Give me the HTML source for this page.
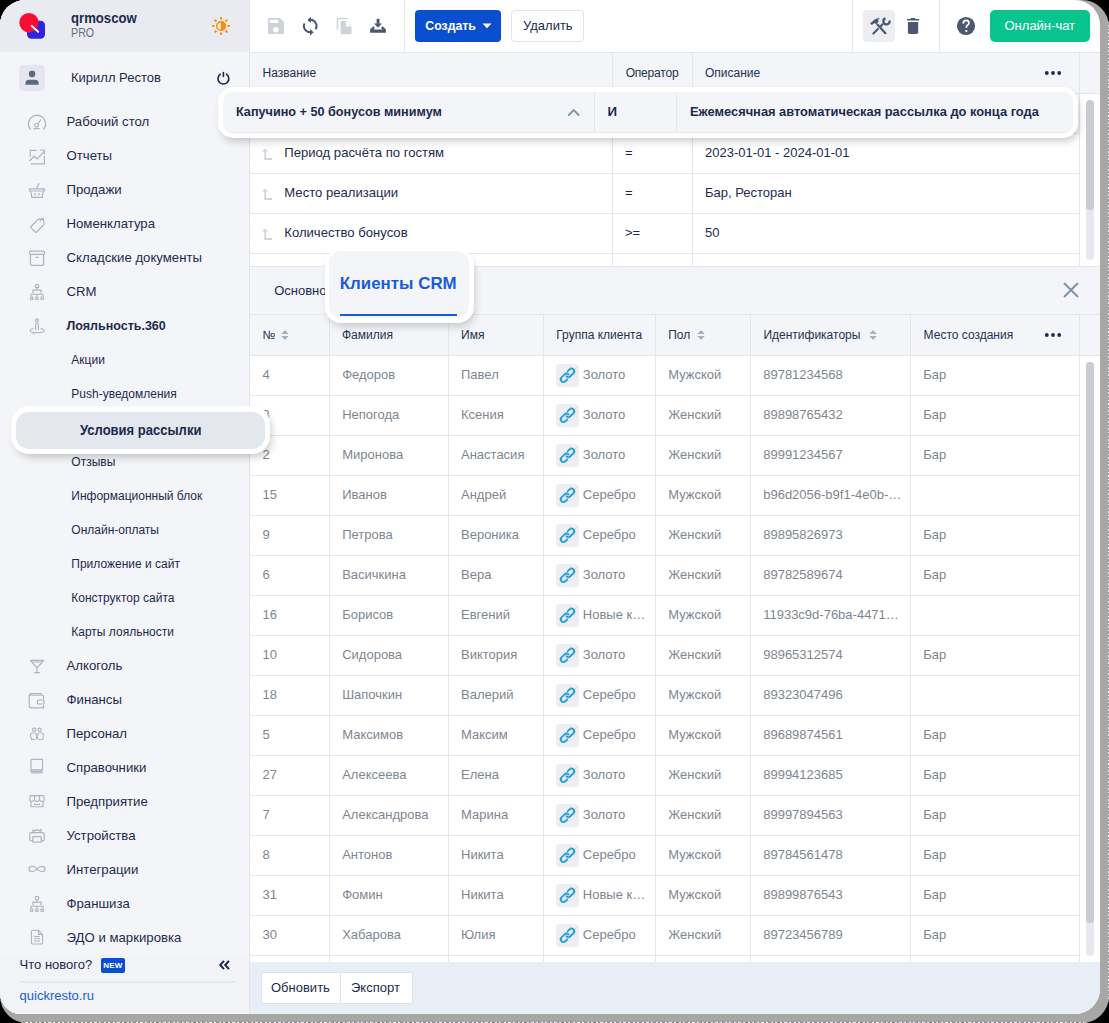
<!DOCTYPE html><html><head><meta charset="utf-8"><style>
*{box-sizing:border-box}
html,body{margin:0;padding:0}
body{width:1109px;height:1023px;overflow:hidden;position:relative;background:#000;font-family:"Liberation Sans", sans-serif}
.a{position:absolute}
.t{position:absolute;line-height:20px;white-space:nowrap}
svg{position:absolute;overflow:visible}
</style></head><body>
<div class="a" style="left:0;top:0;width:1109px;height:1023px;border-radius:27px;background:#a9a6a6;overflow:hidden"><div class="a" style="left:1107.5px;top:0;width:1.5px;height:1023px;background:repeating-linear-gradient(to bottom,#f4f4f4 0 1.4px,#9c9a9a 1.4px 3.6px)"></div><div class="a" style="left:0;top:1021.8px;width:1109px;height:1.2px;background:repeating-linear-gradient(to right,#858585 0 2.4px,#f2f2f2 2.4px 4.6px)"></div></div>
<div class="a" id="app" style="left:0;top:0;width:1100px;height:1014px;border-radius:25px 25px 25px 21px;overflow:hidden;background:#fff">

<div class="a" style="left:0;top:0;width:250px;height:1014px;background:#f4f5f9;border-right:1px solid #e1e4e9"></div>
<div class="a" style="left:0;top:0;width:249px;height:52px;background:#e9ebf0"></div>
<div class="a" style="left:0;top:953.5px;width:249px;height:61px;background:#f2f3f6"></div>
<svg style="left:0;top:0" width="60" height="52">
<rect x="27" y="20.7" width="18" height="18" rx="4.5" fill="#3123e0"/>
<circle cx="29" cy="22.7" r="9.7" fill="#f90d34"/>
<line x1="31.8" y1="26" x2="38.2" y2="31.8" stroke="#fff" stroke-width="1.9" stroke-linecap="round"/>
</svg>
<div class="t" style="left:71.0px;top:7.60px;font-size:15px;font-weight:700;color:#1c2b4d;transform:scaleX(0.876);transform-origin:0 0">qrmoscow</div>
<div class="t" style="left:71.0px;top:23.33px;font-size:12.6px;font-weight:400;color:#667085;transform:scaleX(0.85);transform-origin:0 0">PRO</div>
<svg style="left:0;top:0" width="249" height="52"><line x1="228.40" y1="26.00" x2="229.00" y2="26.00" stroke="#ff8c00" stroke-width="2.2" stroke-linecap="round"/><line x1="226.23" y1="31.23" x2="226.66" y2="31.66" stroke="#ff8c00" stroke-width="2.2" stroke-linecap="round"/><line x1="221.00" y1="33.40" x2="221.00" y2="34.00" stroke="#ff8c00" stroke-width="2.2" stroke-linecap="round"/><line x1="215.77" y1="31.23" x2="215.34" y2="31.66" stroke="#ff8c00" stroke-width="2.2" stroke-linecap="round"/><line x1="213.60" y1="26.00" x2="213.00" y2="26.00" stroke="#ff8c00" stroke-width="2.2" stroke-linecap="round"/><line x1="215.77" y1="20.77" x2="215.34" y2="20.34" stroke="#ff8c00" stroke-width="2.2" stroke-linecap="round"/><line x1="221.00" y1="18.60" x2="221.00" y2="18.00" stroke="#ff8c00" stroke-width="2.2" stroke-linecap="round"/><line x1="226.23" y1="20.77" x2="226.66" y2="20.34" stroke="#ff8c00" stroke-width="2.2" stroke-linecap="round"/>
<circle cx="221" cy="26" r="4.3" fill="none" stroke="#ff8c00" stroke-width="1.4"/>
<path d="M221 21 A5 5 0 0 1 221 31 Z" fill="#ff8c00"/>
</svg>
<div class="a" style="left:19px;top:65px;width:26px;height:26px;border-radius:5px;background:#e3e6ed"></div>
<svg style="left:0;top:0" width="60" height="100">
<rect x="28.9" y="70.8" width="6.3" height="6.4" rx="2.4" fill="#5b6882"/>
<path d="M25.3 84.8 L25.8 81.8 Q26.3 79.7 29 79.7 L35.2 79.7 Q37.9 79.7 38.4 81.8 L38.8 84.8 Z" fill="#5b6882"/>
</svg>
<div class="t" style="left:71.0px;top:68.10px;font-size:13px;font-weight:400;color:#1c2b4d;">Кирилл Рестов</div>
<svg style="left:0;top:0" width="249" height="100">
<path d="M220.3 74.2 A5.4 5.4 0 1 0 226.5 74.2" fill="none" stroke="#1b2a4a" stroke-width="1.6" stroke-linecap="round"/>
<line x1="223.4" y1="72.6" x2="223.4" y2="76.4" stroke="#1b2a4a" stroke-width="1.6" stroke-linecap="round"/>
</svg>
<svg style="left:0;top:0" width="249" height="1014"><path d="M30.5 129.5 A8.6 8.6 0 1 1 43.5 129.5" fill="none" stroke="#aeb5c1" stroke-width="1.3"/><circle cx="36.6" cy="125.3" r="1.8" fill="none" stroke="#aeb5c1" stroke-width="1.2"/><line x1="38" y1="124" x2="41" y2="119.5" stroke="#aeb5c1" stroke-width="1.2"/><line x1="33.5" y1="128.6" x2="39.7" y2="128.6" stroke="#aeb5c1" stroke-width="1.2"/><path d="M30.2 157 V150.3 H36.5 M44.4 156 V163.8 H30.8" fill="none" stroke="#aeb5c1" stroke-width="1.2"/><path d="M29.3 161 L34.3 156.2 L37 158.8 L44 151.6 M40.2 150 H44.4 V154.3" fill="none" stroke="#aeb5c1" stroke-width="1.2"/><path d="M29.5 188.8 H44.5 V191 H29.5 Z M30.8 191 L31.8 197.4 H42.2 L43.2 191 M35 193 V195.5 M39 193 V195.5 M36.5 188.8 L39 183.2" fill="none" stroke="#aeb5c1" stroke-width="1.2" stroke-linejoin="round"/><path d="M31 226.5 L38.3 219.2 L41.4 219.2 Q43.8 219.2 43.8 221.6 L43.8 224.7 L36.5 232 Q35.8 232.7 35.1 232 L31 227.9 Q30.3 227.2 31 226.5 Z" fill="none" stroke="#aeb5c1" stroke-width="1.2"/><path d="M40 221.5 Q42 216.5 44 219.5" fill="none" stroke="#aeb5c1" stroke-width="1.2"/><rect x="29.5" y="251.2" width="15" height="3.2" rx="1.2" fill="none" stroke="#aeb5c1" stroke-width="1.3"/><path d="M30.4 254.6 V264 Q30.4 265.4 31.8 265.4 H42.2 Q43.6 265.4 43.6 264 V254.6 M35.6 257.3 H38.4" fill="none" stroke="#aeb5c1" stroke-width="1.3"/><circle cx="37" cy="286.1" r="1.7" fill="none" stroke="#aeb5c1" stroke-width="1.2"/><path d="M37 288 V290.2 M33 293.4 V290.2 H41 V293.4" fill="none" stroke="#aeb5c1" stroke-width="1.2"/><circle cx="31.7" cy="298.3" r="1.4" fill="none" stroke="#aeb5c1" stroke-width="1.2"/><circle cx="37" cy="298.3" r="1.4" fill="none" stroke="#aeb5c1" stroke-width="1.2"/><circle cx="42.2" cy="298.3" r="1.4" fill="none" stroke="#aeb5c1" stroke-width="1.2"/><path d="M31 296.5 V294.2 H43 V296.5 M37 294.2 V296.5" fill="none" stroke="#aeb5c1" stroke-width="1.1"/><circle cx="37" cy="320.3" r="1.5" fill="none" stroke="#aeb5c1" stroke-width="1.2"/><path d="M35.6 330 V324.5 Q35.6 323 37 323 Q38.4 323 38.4 324.5 V330" fill="none" stroke="#aeb5c1" stroke-width="1.2"/><path d="M33.5 328.3 Q29.7 329.3 30.2 331.3 Q31 332.6 37 332.6 Q43.5 332.6 44 331.3 Q44.4 329.3 40.5 328.3 M33 332.8 L34.3 334.5" fill="none" stroke="#aeb5c1" stroke-width="1.1"/><path d="M30.3 660.3 H43.7 L37 668 Z M37 668 V672.5 M34.2 672.6 H39.8" fill="none" stroke="#aeb5c1" stroke-width="1.2" stroke-linejoin="round"/><line x1="32.3" y1="662" x2="41.7" y2="662" stroke="#aeb5c1" stroke-width="1"/><path d="M42 693.5 H31.5 Q29.2 693.5 29.2 695.8 V705.8 Q29.2 707.8 31.2 707.8 H43.5 V705 M29.5 695.2 H42.5 Q43.5 695.2 43.5 696.5 V699.5" fill="none" stroke="#aeb5c1" stroke-width="1.2"/><rect x="37.5" y="700" width="6.5" height="4" rx="1" fill="none" stroke="#aeb5c1" stroke-width="1.2"/><circle cx="34.2" cy="729.8" r="1.7" fill="none" stroke="#aeb5c1" stroke-width="1.1"/><circle cx="39.6" cy="729.8" r="1.7" fill="none" stroke="#aeb5c1" stroke-width="1.1"/><path d="M33.7 732.8 Q30.5 732.8 30.5 735.3 Q30.5 737 31.5 739.5 H35 M40.2 732.8 Q43.5 732.8 43.5 735.3 Q43.5 737 42.5 739.5 H39 M34.5 732.8 Q36.8 733.5 36.6 736.5 Q36.5 738.5 35.6 739.5 M39.5 732.8 Q37.4 733.5 37.4 736.5 Q37.5 738.5 38.5 739.5" fill="none" stroke="#aeb5c1" stroke-width="1.1"/><path d="M31 771.3 V760.5 Q31 759.3 32.2 759.3 H42.5 V769.8 H32.3 Q31 769.8 31 771.3 Q31 772.8 32.3 772.8 H42.7 M32.3 771.3 H42.5" fill="none" stroke="#aeb5c1" stroke-width="1.2"/><path d="M30.3 795.6 H43.7 L44.3 799.3 Q44.3 801.5 42.2 801.5 Q40 801.5 39.5 799.3 Q39 801.5 37 801.5 Q35 801.5 34.5 799.3 Q34 801.5 31.8 801.5 Q29.7 801.5 29.7 799.3 Z M34.5 795.6 V799.3 M39.5 795.6 V799.3 M31 801.5 V806.7 H43 V801.5 M34.5 803.5 V804.5 H39.5 V803.5" fill="none" stroke="#aeb5c1" stroke-width="1.1"/><path d="M33 832.5 V829.5 M33 829.5 L35 831 L37 829.5 L39 831 L41 829.5 V832.5 M32.8 840.8 H31 Q29.8 840.8 29.8 839.6 V834 Q29.8 832.6 31.2 832.6 H42.8 Q44.2 832.6 44.2 834 V839.6 Q44.2 840.8 43 840.8 H41.2" fill="none" stroke="#aeb5c1" stroke-width="1.2"/><rect x="32.8" y="836.6" width="8.4" height="5.5" rx="0.6" fill="none" stroke="#aeb5c1" stroke-width="1.2"/><path d="M37 869 C34.5 865.5 29 865.5 29 869 C29 872.5 34.5 872.5 37 869 C39.5 865.5 45 865.5 45 869 C45 872.5 39.5 872.5 37 869 Z" fill="none" stroke="#aeb5c1" stroke-width="1.2"/><circle cx="37" cy="898.1" r="1.7" fill="none" stroke="#aeb5c1" stroke-width="1.2"/><path d="M37 900 V902.2 M33 905.4 V902.2 H41 V905.4" fill="none" stroke="#aeb5c1" stroke-width="1.2"/><circle cx="31.7" cy="910.3" r="1.4" fill="none" stroke="#aeb5c1" stroke-width="1.2"/><circle cx="37" cy="910.3" r="1.4" fill="none" stroke="#aeb5c1" stroke-width="1.2"/><circle cx="42.2" cy="910.3" r="1.4" fill="none" stroke="#aeb5c1" stroke-width="1.2"/><path d="M31 908.5 V906.2 H43 V908.5 M37 906.2 V908.5" fill="none" stroke="#aeb5c1" stroke-width="1.1"/><path d="M32 930.3 H38.5 L42.6 934.4 V942.8 Q42.6 944 41.4 944 H32.6 Q31.4 944 31.4 942.8 V931.4 Q31.4 930.3 32.5 930.3 Z M38.5 930.5 V934.4 H42.5 M34 936.5 H39.5 M34 938.8 H40 M34 941 H40" fill="none" stroke="#aeb5c1" stroke-width="1.1"/></svg>
<div class="t" style="left:66.5px;top:111.73px;font-size:13.2px;font-weight:400;color:#1c2b4d;">Рабочий стол</div>
<div class="t" style="left:66.5px;top:145.73px;font-size:13.2px;font-weight:400;color:#1c2b4d;">Отчеты</div>
<div class="t" style="left:66.5px;top:179.73px;font-size:13.2px;font-weight:400;color:#1c2b4d;">Продажи</div>
<div class="t" style="left:66.5px;top:213.73px;font-size:13.2px;font-weight:400;color:#1c2b4d;">Номенклатура</div>
<div class="t" style="left:66.5px;top:247.73px;font-size:13.2px;font-weight:400;color:#1c2b4d;">Складские документы</div>
<div class="t" style="left:66.5px;top:281.73px;font-size:13.2px;font-weight:400;color:#1c2b4d;">CRM</div>
<div class="t" style="left:66.5px;top:315.97px;font-size:12.5px;font-weight:700;color:#1c2b4d;">Лояльность.360</div>
<div class="t" style="left:71.3px;top:350.14px;font-size:12px;font-weight:400;color:#1c2b4d;">Акции</div>
<div class="t" style="left:71.3px;top:384.14px;font-size:12px;font-weight:400;color:#1c2b4d;">Push-уведомления</div>
<div class="t" style="left:71.3px;top:452.14px;font-size:12px;font-weight:400;color:#1c2b4d;">Отзывы</div>
<div class="t" style="left:71.3px;top:486.14px;font-size:12px;font-weight:400;color:#1c2b4d;">Информационный блок</div>
<div class="t" style="left:71.3px;top:520.14px;font-size:12px;font-weight:400;color:#1c2b4d;">Онлайн-оплаты</div>
<div class="t" style="left:71.3px;top:554.14px;font-size:12px;font-weight:400;color:#1c2b4d;">Приложение и сайт</div>
<div class="t" style="left:71.3px;top:588.14px;font-size:12px;font-weight:400;color:#1c2b4d;">Конструктор сайта</div>
<div class="t" style="left:71.3px;top:622.14px;font-size:12px;font-weight:400;color:#1c2b4d;">Карты лояльности</div>
<div class="t" style="left:66.5px;top:655.73px;font-size:13.2px;font-weight:400;color:#1c2b4d;">Алкоголь</div>
<div class="t" style="left:66.5px;top:689.73px;font-size:13.2px;font-weight:400;color:#1c2b4d;">Финансы</div>
<div class="t" style="left:66.5px;top:723.73px;font-size:13.2px;font-weight:400;color:#1c2b4d;">Персонал</div>
<div class="t" style="left:66.5px;top:757.73px;font-size:13.2px;font-weight:400;color:#1c2b4d;">Справочники</div>
<div class="t" style="left:66.5px;top:791.73px;font-size:13.2px;font-weight:400;color:#1c2b4d;">Предприятие</div>
<div class="t" style="left:66.5px;top:825.73px;font-size:13.2px;font-weight:400;color:#1c2b4d;">Устройства</div>
<div class="t" style="left:66.5px;top:859.73px;font-size:13.2px;font-weight:400;color:#1c2b4d;">Интеграции</div>
<div class="t" style="left:66.5px;top:893.73px;font-size:13.2px;font-weight:400;color:#1c2b4d;">Франшиза</div>
<div class="t" style="left:66.5px;top:927.73px;font-size:13.2px;font-weight:400;color:#1c2b4d;">ЭДО и маркировка</div>
<div class="t" style="left:19.6px;top:954.80px;font-size:13px;font-weight:400;color:#1c2b4d;">Что нового?</div>
<div class="a" style="left:101px;top:958.2px;width:24px;height:14.8px;border-radius:2px;background:#0b4fcf;color:#fff;font-size:8px;font-weight:700;line-height:15.5px;text-align:center;letter-spacing:0.2px">NEW</div>
<svg style="left:0;top:0" width="249" height="1014">
<path d="M224 960.8 L220.2 965 L224 969.2 M229 960.8 L225.2 965 L229 969.2" fill="none" stroke="#1b2a4a" stroke-width="2"/>
</svg>
<div class="a" style="left:19.6px;top:981.2px;width:215px;height:1.6px;background:#e4e7ec"></div>
<div class="t" style="left:19.6px;top:986.30px;font-size:13px;font-weight:400;color:#1a5cd6;">quickresto.ru</div>
<div class="a" style="left:250px;top:52px;width:850px;height:1px;background:#e3e6eb"></div>
<div class="a" style="left:404px;top:0;width:1px;height:52px;background:#e6e8ec"></div>
<div class="a" style="left:852px;top:0;width:1px;height:52px;background:#e6e8ec"></div>
<div class="a" style="left:939px;top:0;width:1px;height:52px;background:#e6e8ec"></div>
<svg style="left:0;top:0" width="1100" height="52">
<path d="M268 19.3 Q268 18 269.3 18 H280 L284 22 V32.6 Q284 34 282.6 34 H269.3 Q268 34 268 32.6 Z" fill="#cdd2db"/>
<rect x="269.8" y="19.8" width="8.4" height="3.3" rx="0.5" fill="#fff"/>
<circle cx="275.8" cy="29.7" r="2.7" fill="#fff"/>
<path d="M310.6 19.8 A6.2 6.2 0 0 1 315.6 29.3" fill="none" stroke="#4b5773" stroke-width="1.9"/>
<path d="M307.3 19.9 L311 16.7 L311 23.1 Z" fill="#4b5773"/>
<path d="M304.5 23.3 A6.2 6.2 0 0 0 310 32.2" fill="none" stroke="#4b5773" stroke-width="1.9"/>
<path d="M313.7 32.2 L310 29 L310 35.4 Z" fill="#4b5773"/>
<path d="M337.5 29.5 V18.5 H347.5" fill="none" stroke="#cdd2db" stroke-width="1.5"/>
<path d="M341.5 21 H346.5 L351.5 26 V33 Q351.5 34.2 350.3 34.2 H341.8 Q340.6 34.2 340.6 33 V22 Q340.6 21 341.5 21 Z" fill="#cdd2db"/>
<path d="M346 21 V26.5 H351.5 Z" fill="#fff"/>
<rect x="376.6" y="18.8" width="2.9" height="5.5" fill="#4b5773"/>
<path d="M374 23.5 H382 L378 27.8 Z" fill="#4b5773"/>
<path d="M370.1 29.6 L373.3 26.3 L375 28 L373.4 29.6 H382.6 L381 28 L382.7 26.3 L385.9 29.6 V32.8 H370.1 Z" fill="#4b5773"/>
</svg>
<div class="a" style="left:415px;top:10px;width:86px;height:32px;border-radius:4px;background:#0a4fcf"></div>
<div class="t" style="left:425.3px;top:16.04px;font-size:12.3px;font-weight:700;color:#fff;">Создать</div>
<svg style="left:0;top:0" width="600" height="52"><path d="M482.5 23.5 H491.5 L487 28.3 Z" fill="#fff"/></svg>
<div class="a" style="left:511px;top:10px;width:73px;height:32px;border-radius:4px;background:#fff;border:1px solid #e2e4e8"></div>
<div class="t" style="left:523.0px;top:15.80px;font-size:13px;font-weight:400;color:#1c2b4d;">Удалить</div>
<div class="a" style="left:863px;top:10px;width:32px;height:32px;border-radius:4px;background:#eceef2"></div>
<svg style="left:0;top:0" width="1100" height="52">
<path d="M877.4 24.6 L885.4 33.2" stroke="#4b5773" stroke-width="2.2" stroke-linecap="round"/>
<path d="M870.1 23.4 L874.6 19.6 Q877.3 17.9 880.2 18.3 L877.9 19.8 L878.8 21.2 L876.2 24.2 L874.6 22.9 L871.9 25.1 Z" fill="#4b5773"/>
<path d="M873.4 33.5 L877.9 29 M879.9 27 L882.6 24.3" stroke="#4b5773" stroke-width="2.1" stroke-linecap="round"/>
<path d="M885.44 18.39 A3.1 3.1 0 1 0 889.49 20.5" fill="none" stroke="#4b5773" stroke-width="2.2"/>
<rect x="906.8" y="18.9" width="12.5" height="1.7" rx="0.8" fill="#4b5773"/>
<rect x="910.6" y="18" width="4.8" height="1.6" rx="0.8" fill="#4b5773"/>
<path d="M907.9 22 H918.2 V32.2 Q918.2 33.9 916.5 33.9 H909.6 Q907.9 33.9 907.9 32.2 Z" fill="#4b5773"/>
<circle cx="966" cy="26" r="9.1" fill="#4b5773"/>
<path d="M963.2 23.6 Q963.3 20.4 966.1 20.4 Q968.9 20.4 968.9 23 Q968.9 24.5 967.4 25.3 Q966.3 26 966.3 27.7" fill="none" stroke="#fff" stroke-width="1.75"/>
<circle cx="966.3" cy="31.1" r="1.15" fill="#fff"/>
</svg>
<div class="a" style="left:990px;top:10px;width:100px;height:32px;border-radius:5px;background:#0ac48f"></div>
<div class="t" style="left:1004.5px;top:15.80px;font-size:13px;font-weight:400;color:#fff;">Онлайн-чат</div>
<div class="a" style="left:250px;top:53px;width:850px;height:41px;background:#f3f5f9;border-bottom:1px solid #e4e6ea"></div>

<div class="a" style="left:612px;top:53px;width:1px;height:213px;background:#e4e6ea"></div>
<div class="a" style="left:692px;top:53px;width:1px;height:213px;background:#e4e6ea"></div>
<div class="a" style="left:1079px;top:53px;width:1px;height:213px;background:#e4e6ea"></div>
<div class="t" style="left:262.6px;top:62.74px;font-size:12px;font-weight:400;color:#24324f;">Название</div>
<div class="t" style="left:625.7px;top:62.74px;font-size:12px;font-weight:400;color:#24324f;letter-spacing:-0.2px">Оператор</div>
<div class="t" style="left:705.0px;top:62.74px;font-size:12px;font-weight:400;color:#24324f;">Описание</div>
<svg style="left:0;top:0" width="1100" height="100"><circle cx="1046.8" cy="73" r="1.9" fill="#1c2b4d"/><circle cx="1053" cy="73" r="1.9" fill="#1c2b4d"/><circle cx="1059.2" cy="73" r="1.9" fill="#1c2b4d"/></svg>
<div class="a" style="left:250px;top:94px;width:829px;height:40px;background:#f3f5f9;border-bottom:1px solid #e4e6ea"></div>
<div class="a" style="left:250px;top:173px;width:829px;height:1px;background:#e4e6ea"></div>
<div class="t" style="left:284.3px;top:142.76px;font-size:13.1px;font-weight:400;color:#1c2b4d;">Период расчёта по гостям</div>
<div class="t" style="left:625.0px;top:142.80px;font-size:13px;font-weight:400;color:#1c2b4d;">=</div>
<div class="t" style="left:705.0px;top:142.80px;font-size:13px;font-weight:400;color:#1c2b4d;">2023-01-01 - 2024-01-01</div>
<svg style="left:0;top:0" width="300" height="300"><path d="M262 151.6 L265.2 148.6 L268.3 151.6 Z" transform="translate(0,0)" fill="#d0d6e0"/><path d="M265.2 151 V159 H272" transform="translate(0,0)" fill="none" stroke="#d0d6e0" stroke-width="1.8"/></svg>
<div class="a" style="left:250px;top:213px;width:829px;height:1px;background:#e4e6ea"></div>
<div class="t" style="left:284.3px;top:182.76px;font-size:13.1px;font-weight:400;color:#1c2b4d;">Место реализации</div>
<div class="t" style="left:625.0px;top:182.80px;font-size:13px;font-weight:400;color:#1c2b4d;">=</div>
<div class="t" style="left:705.0px;top:182.80px;font-size:13px;font-weight:400;color:#1c2b4d;">Бар, Ресторан</div>
<svg style="left:0;top:0" width="300" height="300"><path d="M262 151.6 L265.2 148.6 L268.3 151.6 Z" transform="translate(0,40)" fill="#d0d6e0"/><path d="M265.2 151 V159 H272" transform="translate(0,40)" fill="none" stroke="#d0d6e0" stroke-width="1.8"/></svg>
<div class="a" style="left:250px;top:253px;width:829px;height:1px;background:#e4e6ea"></div>
<div class="t" style="left:284.3px;top:222.76px;font-size:13.1px;font-weight:400;color:#1c2b4d;">Количество бонусов</div>
<div class="t" style="left:625.0px;top:222.80px;font-size:13px;font-weight:400;color:#1c2b4d;">>=</div>
<div class="t" style="left:705.0px;top:222.80px;font-size:13px;font-weight:400;color:#1c2b4d;">50</div>
<svg style="left:0;top:0" width="300" height="300"><path d="M262 151.6 L265.2 148.6 L268.3 151.6 Z" transform="translate(0,80)" fill="#d0d6e0"/><path d="M265.2 151 V159 H272" transform="translate(0,80)" fill="none" stroke="#d0d6e0" stroke-width="1.8"/></svg>
<div class="a" style="left:1086px;top:100px;width:8px;height:160px;border-radius:4px;background:#e6e8ed"></div>
<div class="a" style="left:1086px;top:100px;width:8px;height:110px;border-radius:4px;background:#c9ccd3"></div>
<div class="a" style="left:250px;top:266px;width:850px;height:49px;background:#f3f5f9;border-top:1px solid #e4e6ea;border-bottom:1px solid #e4e6ea"></div>
<div class="t" style="left:274.2px;top:280.70px;font-size:13px;font-weight:400;color:#1c2b4d;">Основное</div>
<svg style="left:0;top:0" width="1100" height="320"><path d="M1064 283 L1078 297 M1078 283 L1064 297" stroke="#7b94a4" stroke-width="1.9"/></svg>
<div class="a" style="left:250px;top:315px;width:850px;height:41px;background:#f3f5f9;border-bottom:1px solid #e4e6ea"></div>
<div class="a" style="left:329px;top:315px;width:1px;height:647px;background:#e4e6ea"></div>
<div class="a" style="left:448px;top:315px;width:1px;height:647px;background:#e4e6ea"></div>
<div class="a" style="left:543px;top:315px;width:1px;height:647px;background:#e4e6ea"></div>
<div class="a" style="left:655px;top:315px;width:1px;height:647px;background:#e4e6ea"></div>
<div class="a" style="left:750px;top:315px;width:1px;height:647px;background:#e4e6ea"></div>
<div class="a" style="left:910px;top:315px;width:1px;height:647px;background:#e4e6ea"></div>
<div class="a" style="left:1079px;top:315px;width:1px;height:647px;background:#e4e6ea"></div>
<div class="a" style="left:1080px;top:356px;width:20px;height:606px;background:#fff"></div>
<div class="t" style="left:262.5px;top:325.34px;font-size:12px;font-weight:400;color:#24324f;">№</div>
<div class="t" style="left:342.0px;top:325.34px;font-size:12px;font-weight:400;color:#24324f;">Фамилия</div>
<div class="t" style="left:461.0px;top:325.34px;font-size:12px;font-weight:400;color:#24324f;">Имя</div>
<div class="t" style="left:556.3px;top:325.34px;font-size:12px;font-weight:400;color:#24324f;">Группа клиента</div>
<div class="t" style="left:668.2px;top:325.34px;font-size:12px;font-weight:400;color:#24324f;">Пол</div>
<div class="t" style="left:763.4px;top:325.34px;font-size:12px;font-weight:400;color:#24324f;">Идентификаторы</div>
<div class="t" style="left:923.6px;top:325.34px;font-size:12px;font-weight:400;color:#24324f;">Место создания</div>
<svg style="left:0;top:0" width="1100" height="400"><path d="M281.2 334 L284.95 330 L288.7 334 Z M281.2 336 L284.95 340 L288.7 336 Z" fill="#a9b1bd"/><path d="M697.3 334 L701.05 330 L704.8 334 Z M697.3 336 L701.05 340 L704.8 336 Z" fill="#a9b1bd"/><path d="M869.3 334 L873.05 330 L876.8 334 Z M869.3 336 L873.05 340 L876.8 336 Z" fill="#a9b1bd"/><circle cx="1046.8" cy="335" r="1.9" fill="#1c2b4d"/><circle cx="1053" cy="335" r="1.9" fill="#1c2b4d"/><circle cx="1059.2" cy="335" r="1.9" fill="#1c2b4d"/></svg>
<div class="a" style="left:250px;top:395px;width:829px;height:1px;background:#e4e6ea"></div>
<div class="t" style="left:262.5px;top:364.70px;font-size:13px;font-weight:400;color:#7e868f;">4</div>
<div class="t" style="left:342.2px;top:364.70px;font-size:13px;font-weight:400;color:#7e868f;">Федоров</div>
<div class="t" style="left:461.0px;top:364.70px;font-size:13px;font-weight:400;color:#7e868f;">Павел</div>
<div class="t" style="left:582.8px;top:364.70px;font-size:13px;font-weight:400;color:#7e868f;">Золото</div>
<div class="t" style="left:668.2px;top:364.70px;font-size:13px;font-weight:400;color:#7e868f;">Мужской</div>
<div class="t" style="left:763.2px;top:364.70px;font-size:13px;font-weight:400;color:#7e868f;">89781234568</div>
<div class="t" style="left:923.2px;top:364.70px;font-size:13px;font-weight:400;color:#7e868f;">Бар</div>
<div class="a" style="left:556px;top:364px;width:23px;height:23px;border-radius:4px;background:#eceef2"></div>
<div class="a" style="left:250px;top:435px;width:829px;height:1px;background:#e4e6ea"></div>
<div class="t" style="left:262.5px;top:404.70px;font-size:13px;font-weight:400;color:#7e868f;">3</div>
<div class="t" style="left:342.2px;top:404.70px;font-size:13px;font-weight:400;color:#7e868f;">Непогода</div>
<div class="t" style="left:461.0px;top:404.70px;font-size:13px;font-weight:400;color:#7e868f;">Ксения</div>
<div class="t" style="left:582.8px;top:404.70px;font-size:13px;font-weight:400;color:#7e868f;">Золото</div>
<div class="t" style="left:668.2px;top:404.70px;font-size:13px;font-weight:400;color:#7e868f;">Женский</div>
<div class="t" style="left:763.2px;top:404.70px;font-size:13px;font-weight:400;color:#7e868f;">89898765432</div>
<div class="t" style="left:923.2px;top:404.70px;font-size:13px;font-weight:400;color:#7e868f;">Бар</div>
<div class="a" style="left:556px;top:404px;width:23px;height:23px;border-radius:4px;background:#eceef2"></div>
<div class="a" style="left:250px;top:475px;width:829px;height:1px;background:#e4e6ea"></div>
<div class="t" style="left:262.5px;top:444.70px;font-size:13px;font-weight:400;color:#7e868f;">2</div>
<div class="t" style="left:342.2px;top:444.70px;font-size:13px;font-weight:400;color:#7e868f;">Миронова</div>
<div class="t" style="left:461.0px;top:444.70px;font-size:13px;font-weight:400;color:#7e868f;">Анастасия</div>
<div class="t" style="left:582.8px;top:444.70px;font-size:13px;font-weight:400;color:#7e868f;">Золото</div>
<div class="t" style="left:668.2px;top:444.70px;font-size:13px;font-weight:400;color:#7e868f;">Женский</div>
<div class="t" style="left:763.2px;top:444.70px;font-size:13px;font-weight:400;color:#7e868f;">89991234567</div>
<div class="t" style="left:923.2px;top:444.70px;font-size:13px;font-weight:400;color:#7e868f;">Бар</div>
<div class="a" style="left:556px;top:444px;width:23px;height:23px;border-radius:4px;background:#eceef2"></div>
<div class="a" style="left:250px;top:515px;width:829px;height:1px;background:#e4e6ea"></div>
<div class="t" style="left:262.5px;top:484.70px;font-size:13px;font-weight:400;color:#7e868f;">15</div>
<div class="t" style="left:342.2px;top:484.70px;font-size:13px;font-weight:400;color:#7e868f;">Иванов</div>
<div class="t" style="left:461.0px;top:484.70px;font-size:13px;font-weight:400;color:#7e868f;">Андрей</div>
<div class="t" style="left:582.8px;top:484.70px;font-size:13px;font-weight:400;color:#7e868f;">Серебро</div>
<div class="t" style="left:668.2px;top:484.70px;font-size:13px;font-weight:400;color:#7e868f;">Мужской</div>
<div class="t" style="left:763.2px;top:484.70px;font-size:13px;font-weight:400;color:#7e868f;">b96d2056-b9f1-4e0b-…</div>
<div class="a" style="left:556px;top:484px;width:23px;height:23px;border-radius:4px;background:#eceef2"></div>
<div class="a" style="left:250px;top:555px;width:829px;height:1px;background:#e4e6ea"></div>
<div class="t" style="left:262.5px;top:524.70px;font-size:13px;font-weight:400;color:#7e868f;">9</div>
<div class="t" style="left:342.2px;top:524.70px;font-size:13px;font-weight:400;color:#7e868f;">Петрова</div>
<div class="t" style="left:461.0px;top:524.70px;font-size:13px;font-weight:400;color:#7e868f;">Вероника</div>
<div class="t" style="left:582.8px;top:524.70px;font-size:13px;font-weight:400;color:#7e868f;">Серебро</div>
<div class="t" style="left:668.2px;top:524.70px;font-size:13px;font-weight:400;color:#7e868f;">Женский</div>
<div class="t" style="left:763.2px;top:524.70px;font-size:13px;font-weight:400;color:#7e868f;">89895826973</div>
<div class="t" style="left:923.2px;top:524.70px;font-size:13px;font-weight:400;color:#7e868f;">Бар</div>
<div class="a" style="left:556px;top:524px;width:23px;height:23px;border-radius:4px;background:#eceef2"></div>
<div class="a" style="left:250px;top:595px;width:829px;height:1px;background:#e4e6ea"></div>
<div class="t" style="left:262.5px;top:564.70px;font-size:13px;font-weight:400;color:#7e868f;">6</div>
<div class="t" style="left:342.2px;top:564.70px;font-size:13px;font-weight:400;color:#7e868f;">Васичкина</div>
<div class="t" style="left:461.0px;top:564.70px;font-size:13px;font-weight:400;color:#7e868f;">Вера</div>
<div class="t" style="left:582.8px;top:564.70px;font-size:13px;font-weight:400;color:#7e868f;">Золото</div>
<div class="t" style="left:668.2px;top:564.70px;font-size:13px;font-weight:400;color:#7e868f;">Женский</div>
<div class="t" style="left:763.2px;top:564.70px;font-size:13px;font-weight:400;color:#7e868f;">89782589674</div>
<div class="t" style="left:923.2px;top:564.70px;font-size:13px;font-weight:400;color:#7e868f;">Бар</div>
<div class="a" style="left:556px;top:564px;width:23px;height:23px;border-radius:4px;background:#eceef2"></div>
<div class="a" style="left:250px;top:635px;width:829px;height:1px;background:#e4e6ea"></div>
<div class="t" style="left:262.5px;top:604.70px;font-size:13px;font-weight:400;color:#7e868f;">16</div>
<div class="t" style="left:342.2px;top:604.70px;font-size:13px;font-weight:400;color:#7e868f;">Борисов</div>
<div class="t" style="left:461.0px;top:604.70px;font-size:13px;font-weight:400;color:#7e868f;">Евгений</div>
<div class="t" style="left:582.8px;top:604.70px;font-size:13px;font-weight:400;color:#7e868f;">Новые к…</div>
<div class="t" style="left:668.2px;top:604.70px;font-size:13px;font-weight:400;color:#7e868f;">Мужской</div>
<div class="t" style="left:763.2px;top:604.70px;font-size:13px;font-weight:400;color:#7e868f;">11933c9d-76ba-4471…</div>
<div class="a" style="left:556px;top:604px;width:23px;height:23px;border-radius:4px;background:#eceef2"></div>
<div class="a" style="left:250px;top:675px;width:829px;height:1px;background:#e4e6ea"></div>
<div class="t" style="left:262.5px;top:644.70px;font-size:13px;font-weight:400;color:#7e868f;">10</div>
<div class="t" style="left:342.2px;top:644.70px;font-size:13px;font-weight:400;color:#7e868f;">Сидорова</div>
<div class="t" style="left:461.0px;top:644.70px;font-size:13px;font-weight:400;color:#7e868f;">Виктория</div>
<div class="t" style="left:582.8px;top:644.70px;font-size:13px;font-weight:400;color:#7e868f;">Золото</div>
<div class="t" style="left:668.2px;top:644.70px;font-size:13px;font-weight:400;color:#7e868f;">Женский</div>
<div class="t" style="left:763.2px;top:644.70px;font-size:13px;font-weight:400;color:#7e868f;">98965312574</div>
<div class="t" style="left:923.2px;top:644.70px;font-size:13px;font-weight:400;color:#7e868f;">Бар</div>
<div class="a" style="left:556px;top:644px;width:23px;height:23px;border-radius:4px;background:#eceef2"></div>
<div class="a" style="left:250px;top:715px;width:829px;height:1px;background:#e4e6ea"></div>
<div class="t" style="left:262.5px;top:684.70px;font-size:13px;font-weight:400;color:#7e868f;">18</div>
<div class="t" style="left:342.2px;top:684.70px;font-size:13px;font-weight:400;color:#7e868f;">Шапочкин</div>
<div class="t" style="left:461.0px;top:684.70px;font-size:13px;font-weight:400;color:#7e868f;">Валерий</div>
<div class="t" style="left:582.8px;top:684.70px;font-size:13px;font-weight:400;color:#7e868f;">Серебро</div>
<div class="t" style="left:668.2px;top:684.70px;font-size:13px;font-weight:400;color:#7e868f;">Мужской</div>
<div class="t" style="left:763.2px;top:684.70px;font-size:13px;font-weight:400;color:#7e868f;">89323047496</div>
<div class="a" style="left:556px;top:684px;width:23px;height:23px;border-radius:4px;background:#eceef2"></div>
<div class="a" style="left:250px;top:755px;width:829px;height:1px;background:#e4e6ea"></div>
<div class="t" style="left:262.5px;top:724.70px;font-size:13px;font-weight:400;color:#7e868f;">5</div>
<div class="t" style="left:342.2px;top:724.70px;font-size:13px;font-weight:400;color:#7e868f;">Максимов</div>
<div class="t" style="left:461.0px;top:724.70px;font-size:13px;font-weight:400;color:#7e868f;">Максим</div>
<div class="t" style="left:582.8px;top:724.70px;font-size:13px;font-weight:400;color:#7e868f;">Серебро</div>
<div class="t" style="left:668.2px;top:724.70px;font-size:13px;font-weight:400;color:#7e868f;">Мужской</div>
<div class="t" style="left:763.2px;top:724.70px;font-size:13px;font-weight:400;color:#7e868f;">89689874561</div>
<div class="t" style="left:923.2px;top:724.70px;font-size:13px;font-weight:400;color:#7e868f;">Бар</div>
<div class="a" style="left:556px;top:724px;width:23px;height:23px;border-radius:4px;background:#eceef2"></div>
<div class="a" style="left:250px;top:795px;width:829px;height:1px;background:#e4e6ea"></div>
<div class="t" style="left:262.5px;top:764.70px;font-size:13px;font-weight:400;color:#7e868f;">27</div>
<div class="t" style="left:342.2px;top:764.70px;font-size:13px;font-weight:400;color:#7e868f;">Алексеева</div>
<div class="t" style="left:461.0px;top:764.70px;font-size:13px;font-weight:400;color:#7e868f;">Елена</div>
<div class="t" style="left:582.8px;top:764.70px;font-size:13px;font-weight:400;color:#7e868f;">Золото</div>
<div class="t" style="left:668.2px;top:764.70px;font-size:13px;font-weight:400;color:#7e868f;">Женский</div>
<div class="t" style="left:763.2px;top:764.70px;font-size:13px;font-weight:400;color:#7e868f;">89994123685</div>
<div class="t" style="left:923.2px;top:764.70px;font-size:13px;font-weight:400;color:#7e868f;">Бар</div>
<div class="a" style="left:556px;top:764px;width:23px;height:23px;border-radius:4px;background:#eceef2"></div>
<div class="a" style="left:250px;top:835px;width:829px;height:1px;background:#e4e6ea"></div>
<div class="t" style="left:262.5px;top:804.70px;font-size:13px;font-weight:400;color:#7e868f;">7</div>
<div class="t" style="left:342.2px;top:804.70px;font-size:13px;font-weight:400;color:#7e868f;">Александрова</div>
<div class="t" style="left:461.0px;top:804.70px;font-size:13px;font-weight:400;color:#7e868f;">Марина</div>
<div class="t" style="left:582.8px;top:804.70px;font-size:13px;font-weight:400;color:#7e868f;">Золото</div>
<div class="t" style="left:668.2px;top:804.70px;font-size:13px;font-weight:400;color:#7e868f;">Женский</div>
<div class="t" style="left:763.2px;top:804.70px;font-size:13px;font-weight:400;color:#7e868f;">89997894563</div>
<div class="t" style="left:923.2px;top:804.70px;font-size:13px;font-weight:400;color:#7e868f;">Бар</div>
<div class="a" style="left:556px;top:804px;width:23px;height:23px;border-radius:4px;background:#eceef2"></div>
<div class="a" style="left:250px;top:875px;width:829px;height:1px;background:#e4e6ea"></div>
<div class="t" style="left:262.5px;top:844.70px;font-size:13px;font-weight:400;color:#7e868f;">8</div>
<div class="t" style="left:342.2px;top:844.70px;font-size:13px;font-weight:400;color:#7e868f;">Антонов</div>
<div class="t" style="left:461.0px;top:844.70px;font-size:13px;font-weight:400;color:#7e868f;">Никита</div>
<div class="t" style="left:582.8px;top:844.70px;font-size:13px;font-weight:400;color:#7e868f;">Серебро</div>
<div class="t" style="left:668.2px;top:844.70px;font-size:13px;font-weight:400;color:#7e868f;">Мужской</div>
<div class="t" style="left:763.2px;top:844.70px;font-size:13px;font-weight:400;color:#7e868f;">89784561478</div>
<div class="t" style="left:923.2px;top:844.70px;font-size:13px;font-weight:400;color:#7e868f;">Бар</div>
<div class="a" style="left:556px;top:844px;width:23px;height:23px;border-radius:4px;background:#eceef2"></div>
<div class="a" style="left:250px;top:915px;width:829px;height:1px;background:#e4e6ea"></div>
<div class="t" style="left:262.5px;top:884.70px;font-size:13px;font-weight:400;color:#7e868f;">31</div>
<div class="t" style="left:342.2px;top:884.70px;font-size:13px;font-weight:400;color:#7e868f;">Фомин</div>
<div class="t" style="left:461.0px;top:884.70px;font-size:13px;font-weight:400;color:#7e868f;">Никита</div>
<div class="t" style="left:582.8px;top:884.70px;font-size:13px;font-weight:400;color:#7e868f;">Новые к…</div>
<div class="t" style="left:668.2px;top:884.70px;font-size:13px;font-weight:400;color:#7e868f;">Мужской</div>
<div class="t" style="left:763.2px;top:884.70px;font-size:13px;font-weight:400;color:#7e868f;">89899876543</div>
<div class="t" style="left:923.2px;top:884.70px;font-size:13px;font-weight:400;color:#7e868f;">Бар</div>
<div class="a" style="left:556px;top:884px;width:23px;height:23px;border-radius:4px;background:#eceef2"></div>
<div class="a" style="left:250px;top:955px;width:829px;height:1px;background:#e4e6ea"></div>
<div class="t" style="left:262.5px;top:924.70px;font-size:13px;font-weight:400;color:#7e868f;">30</div>
<div class="t" style="left:342.2px;top:924.70px;font-size:13px;font-weight:400;color:#7e868f;">Хабарова</div>
<div class="t" style="left:461.0px;top:924.70px;font-size:13px;font-weight:400;color:#7e868f;">Юлия</div>
<div class="t" style="left:582.8px;top:924.70px;font-size:13px;font-weight:400;color:#7e868f;">Серебро</div>
<div class="t" style="left:668.2px;top:924.70px;font-size:13px;font-weight:400;color:#7e868f;">Женский</div>
<div class="t" style="left:763.2px;top:924.70px;font-size:13px;font-weight:400;color:#7e868f;">89723456789</div>
<div class="t" style="left:923.2px;top:924.70px;font-size:13px;font-weight:400;color:#7e868f;">Бар</div>
<div class="a" style="left:556px;top:924px;width:23px;height:23px;border-radius:4px;background:#eceef2"></div>
<svg style="left:0;top:0" width="1100" height="1014"><g transform="translate(567.5 375.3) rotate(-45) scale(0.9)" fill="none" stroke="#2b9fd8" stroke-width="2.2" stroke-linecap="round"><path d="M-3.5 3 H-6.3 A3 3 0 0 1 -6.3 -3 H-1.5 A3 3 0 0 1 1.5 0"/><path d="M3.5 -3 H6.3 A3 3 0 0 1 6.3 3 H1.5 A3 3 0 0 1 -1.5 0"/></g><g transform="translate(567.5 415.3) rotate(-45) scale(0.9)" fill="none" stroke="#2b9fd8" stroke-width="2.2" stroke-linecap="round"><path d="M-3.5 3 H-6.3 A3 3 0 0 1 -6.3 -3 H-1.5 A3 3 0 0 1 1.5 0"/><path d="M3.5 -3 H6.3 A3 3 0 0 1 6.3 3 H1.5 A3 3 0 0 1 -1.5 0"/></g><g transform="translate(567.5 455.3) rotate(-45) scale(0.9)" fill="none" stroke="#2b9fd8" stroke-width="2.2" stroke-linecap="round"><path d="M-3.5 3 H-6.3 A3 3 0 0 1 -6.3 -3 H-1.5 A3 3 0 0 1 1.5 0"/><path d="M3.5 -3 H6.3 A3 3 0 0 1 6.3 3 H1.5 A3 3 0 0 1 -1.5 0"/></g><g transform="translate(567.5 495.3) rotate(-45) scale(0.9)" fill="none" stroke="#2b9fd8" stroke-width="2.2" stroke-linecap="round"><path d="M-3.5 3 H-6.3 A3 3 0 0 1 -6.3 -3 H-1.5 A3 3 0 0 1 1.5 0"/><path d="M3.5 -3 H6.3 A3 3 0 0 1 6.3 3 H1.5 A3 3 0 0 1 -1.5 0"/></g><g transform="translate(567.5 535.3) rotate(-45) scale(0.9)" fill="none" stroke="#2b9fd8" stroke-width="2.2" stroke-linecap="round"><path d="M-3.5 3 H-6.3 A3 3 0 0 1 -6.3 -3 H-1.5 A3 3 0 0 1 1.5 0"/><path d="M3.5 -3 H6.3 A3 3 0 0 1 6.3 3 H1.5 A3 3 0 0 1 -1.5 0"/></g><g transform="translate(567.5 575.3) rotate(-45) scale(0.9)" fill="none" stroke="#2b9fd8" stroke-width="2.2" stroke-linecap="round"><path d="M-3.5 3 H-6.3 A3 3 0 0 1 -6.3 -3 H-1.5 A3 3 0 0 1 1.5 0"/><path d="M3.5 -3 H6.3 A3 3 0 0 1 6.3 3 H1.5 A3 3 0 0 1 -1.5 0"/></g><g transform="translate(567.5 615.3) rotate(-45) scale(0.9)" fill="none" stroke="#2b9fd8" stroke-width="2.2" stroke-linecap="round"><path d="M-3.5 3 H-6.3 A3 3 0 0 1 -6.3 -3 H-1.5 A3 3 0 0 1 1.5 0"/><path d="M3.5 -3 H6.3 A3 3 0 0 1 6.3 3 H1.5 A3 3 0 0 1 -1.5 0"/></g><g transform="translate(567.5 655.3) rotate(-45) scale(0.9)" fill="none" stroke="#2b9fd8" stroke-width="2.2" stroke-linecap="round"><path d="M-3.5 3 H-6.3 A3 3 0 0 1 -6.3 -3 H-1.5 A3 3 0 0 1 1.5 0"/><path d="M3.5 -3 H6.3 A3 3 0 0 1 6.3 3 H1.5 A3 3 0 0 1 -1.5 0"/></g><g transform="translate(567.5 695.3) rotate(-45) scale(0.9)" fill="none" stroke="#2b9fd8" stroke-width="2.2" stroke-linecap="round"><path d="M-3.5 3 H-6.3 A3 3 0 0 1 -6.3 -3 H-1.5 A3 3 0 0 1 1.5 0"/><path d="M3.5 -3 H6.3 A3 3 0 0 1 6.3 3 H1.5 A3 3 0 0 1 -1.5 0"/></g><g transform="translate(567.5 735.3) rotate(-45) scale(0.9)" fill="none" stroke="#2b9fd8" stroke-width="2.2" stroke-linecap="round"><path d="M-3.5 3 H-6.3 A3 3 0 0 1 -6.3 -3 H-1.5 A3 3 0 0 1 1.5 0"/><path d="M3.5 -3 H6.3 A3 3 0 0 1 6.3 3 H1.5 A3 3 0 0 1 -1.5 0"/></g><g transform="translate(567.5 775.3) rotate(-45) scale(0.9)" fill="none" stroke="#2b9fd8" stroke-width="2.2" stroke-linecap="round"><path d="M-3.5 3 H-6.3 A3 3 0 0 1 -6.3 -3 H-1.5 A3 3 0 0 1 1.5 0"/><path d="M3.5 -3 H6.3 A3 3 0 0 1 6.3 3 H1.5 A3 3 0 0 1 -1.5 0"/></g><g transform="translate(567.5 815.3) rotate(-45) scale(0.9)" fill="none" stroke="#2b9fd8" stroke-width="2.2" stroke-linecap="round"><path d="M-3.5 3 H-6.3 A3 3 0 0 1 -6.3 -3 H-1.5 A3 3 0 0 1 1.5 0"/><path d="M3.5 -3 H6.3 A3 3 0 0 1 6.3 3 H1.5 A3 3 0 0 1 -1.5 0"/></g><g transform="translate(567.5 855.3) rotate(-45) scale(0.9)" fill="none" stroke="#2b9fd8" stroke-width="2.2" stroke-linecap="round"><path d="M-3.5 3 H-6.3 A3 3 0 0 1 -6.3 -3 H-1.5 A3 3 0 0 1 1.5 0"/><path d="M3.5 -3 H6.3 A3 3 0 0 1 6.3 3 H1.5 A3 3 0 0 1 -1.5 0"/></g><g transform="translate(567.5 895.3) rotate(-45) scale(0.9)" fill="none" stroke="#2b9fd8" stroke-width="2.2" stroke-linecap="round"><path d="M-3.5 3 H-6.3 A3 3 0 0 1 -6.3 -3 H-1.5 A3 3 0 0 1 1.5 0"/><path d="M3.5 -3 H6.3 A3 3 0 0 1 6.3 3 H1.5 A3 3 0 0 1 -1.5 0"/></g><g transform="translate(567.5 935.3) rotate(-45) scale(0.9)" fill="none" stroke="#2b9fd8" stroke-width="2.2" stroke-linecap="round"><path d="M-3.5 3 H-6.3 A3 3 0 0 1 -6.3 -3 H-1.5 A3 3 0 0 1 1.5 0"/><path d="M3.5 -3 H6.3 A3 3 0 0 1 6.3 3 H1.5 A3 3 0 0 1 -1.5 0"/></g></svg>
<div class="a" style="left:1086px;top:362px;width:8px;height:594px;border-radius:4px;background:#e6e8ed"></div>
<div class="a" style="left:1086px;top:362px;width:8px;height:561px;border-radius:4px;background:#c9ccd3"></div>
<div class="a" style="left:250px;top:962px;width:850px;height:52px;background:#e8eef5"></div>
<div class="a" style="left:260.5px;top:972px;width:152px;height:31.5px;border-radius:3px;background:#fff;border:1px solid #dfe3e9"></div>
<div class="a" style="left:340px;top:972px;width:1px;height:31.5px;background:#dfe3e9"></div>
<div class="t" style="left:271.0px;top:977.70px;font-size:13px;font-weight:400;color:#1c2b4d;">Обновить</div>
<div class="t" style="left:351.0px;top:977.70px;font-size:13px;font-weight:400;color:#1c2b4d;">Экспорт</div>
<div class="a" style="left:218px;top:87px;width:860px;height:51px;border-radius:15px;background:#fff;box-shadow:2px 5px 8px -2px rgba(0,0,0,0.22)"></div>
<div class="a" style="left:223px;top:92px;width:850px;height:40.5px;border-radius:10px;background:#f3f5f9;border-bottom:1px solid #e6e8ec"></div>
<div class="a" style="left:594px;top:92px;width:1px;height:40.5px;background:#e4e6ea"></div>
<div class="a" style="left:676px;top:92px;width:1px;height:40.5px;background:#e4e6ea"></div>
<div class="t" style="left:235.8px;top:102.39px;font-size:13.3px;font-weight:700;color:#1c2b4d;transform:scaleX(0.951);transform-origin:0 0">Капучино + 50 бонусов минимум</div>
<div class="t" style="left:607.6px;top:102.39px;font-size:13.3px;font-weight:700;color:#1c2b4d;">И</div>
<div class="t" style="left:689.7px;top:102.39px;font-size:13.3px;font-weight:700;color:#1c2b4d;transform:scaleX(0.967);transform-origin:0 0">Ежемесячная автоматическая рассылка до конца года</div>
<svg style="left:0;top:0" width="1100" height="200"><path d="M568.8 115 L573.7 110 L578.7 115" fill="none" stroke="#7f9aab" stroke-width="1.9" stroke-linecap="round"/></svg>
<div class="a" style="left:325px;top:249px;width:149px;height:74px;border-radius:16px;background:#fff;box-shadow:2px 5px 8px -2px rgba(0,0,0,0.2)"></div>
<div class="a" style="left:329px;top:251px;width:140px;height:66.5px;border-radius:12px;background:#f3f5f9"></div>
<div class="t" style="left:339.8px;top:273.54px;font-size:16.9px;font-weight:700;color:#1a5cd6;">Клиенты CRM</div>
<div class="a" style="left:339.5px;top:314px;width:117.5px;height:2px;background:#1a5cd6"></div>
<div class="a" style="left:10.5px;top:405.5px;width:259.5px;height:48.5px;border-radius:18px;background:#fff;box-shadow:3px 5px 8px -2px rgba(0,0,0,0.22)"></div>
<div class="a" style="left:16px;top:412px;width:249px;height:36.5px;border-radius:13px;background:#e4e7ee"></div>
<div class="t" style="left:79.5px;top:420.28px;font-size:14.2px;font-weight:700;color:#1c2b4d;transform:scaleX(0.918);transform-origin:0 0">Условия рассылки</div>
</div></body></html>
